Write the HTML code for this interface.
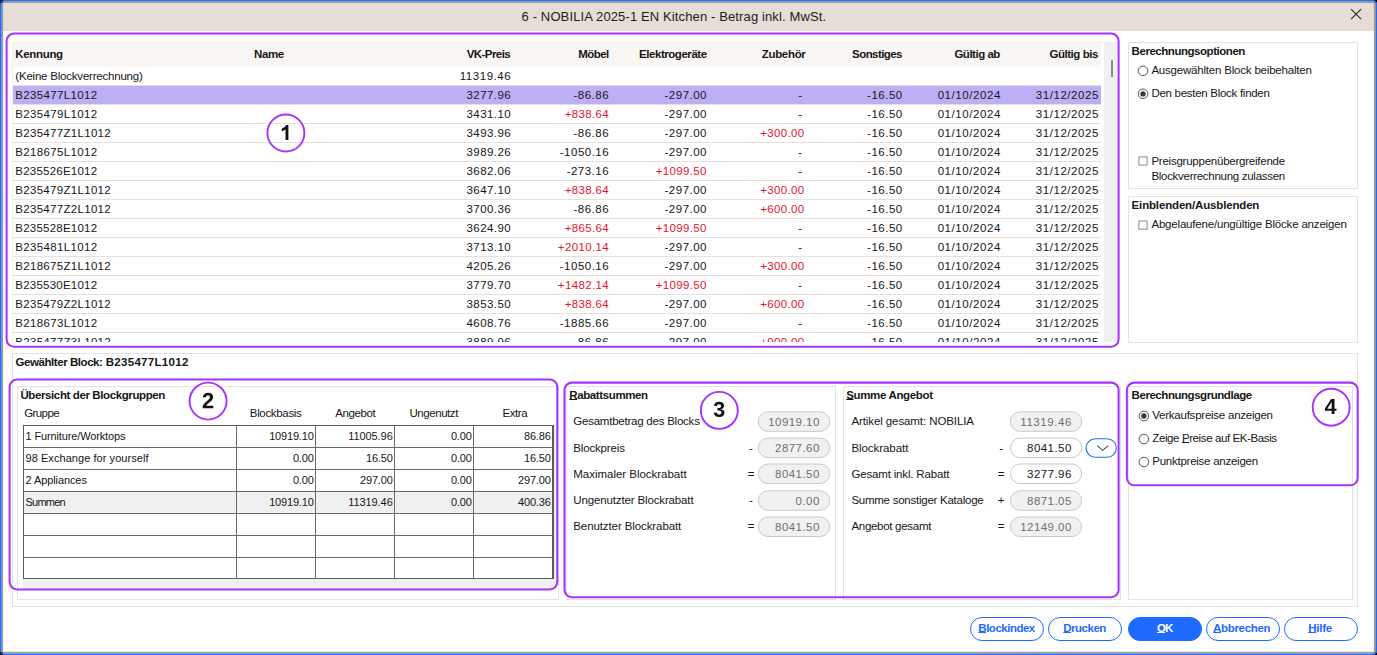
<!DOCTYPE html>
<html lang="de"><head><meta charset="utf-8"><title>Blockverrechnung</title>
<style>
html,body{margin:0;padding:0;background:#fff;}
body{width:1377px;height:655px;position:relative;overflow:hidden;font-family:"Liberation Sans",sans-serif;}
.t{position:absolute;white-space:nowrap;line-height:1;font-family:"Liberation Sans",sans-serif;}
.t u{text-decoration:underline;text-underline-offset:0px;text-decoration-thickness:1px;}
.a{position:absolute;box-sizing:border-box;}
.gb{position:absolute;box-sizing:border-box;border:1px solid #e3e3e3;}
.pill{position:absolute;box-sizing:border-box;border:1px solid #cfcfcf;border-radius:11px;background:#fff;}
.pill.dis{background:#f1f1f1;border-color:#cdcdcd;}
.btn{position:absolute;box-sizing:border-box;border:1px solid #1f6bff;border-radius:12px;background:#fff;height:24px;width:74px;top:617px;}
.btn.pri{background:#1f6bff;}
.rad{position:absolute;box-sizing:border-box;width:11px;height:11px;border:1px solid #555;border-radius:50%;background:#fff;}
.rad.on::after{content:"";position:absolute;left:2px;top:2px;width:5px;height:5px;border-radius:50%;background:#333;}
.chk{position:absolute;box-sizing:border-box;width:10px;height:10px;border:1px solid #8a8a8a;background:#fff;}
</style></head>
<body>
<div class="a" style="left:0;top:0;width:1377px;height:31px;background:#e6ddd7"></div>
<div class="a" style="left:12px;top:42px;width:1106px;height:301px;border:1px solid #eef0f0;border-right:none;border-bottom:none"></div>
<div class="a" style="left:13px;top:43px;width:1088px;height:24px;background:#f9f6f3"></div>
<div class="a" style="left:1104px;top:43px;width:13px;height:299px;background:#f0f0f0"></div>
<div class="a" style="left:1111px;top:60px;width:2px;height:17px;background:#8c8c8c"></div>
<div class="a" style="left:13px;top:67px;width:1088px;height:275px;overflow:hidden">
<div class="a" style="left:0;top:18px;width:1088px;height:1px;background:#eae0d9"></div><div class="a" style="left:0;top:37px;width:1088px;height:1px;background:#eae0d9"></div><div class="a" style="left:0;top:56px;width:1088px;height:1px;background:#eae0d9"></div><div class="a" style="left:0;top:75px;width:1088px;height:1px;background:#eae0d9"></div><div class="a" style="left:0;top:94px;width:1088px;height:1px;background:#eae0d9"></div><div class="a" style="left:0;top:113px;width:1088px;height:1px;background:#eae0d9"></div><div class="a" style="left:0;top:132px;width:1088px;height:1px;background:#eae0d9"></div><div class="a" style="left:0;top:151px;width:1088px;height:1px;background:#eae0d9"></div><div class="a" style="left:0;top:170px;width:1088px;height:1px;background:#eae0d9"></div><div class="a" style="left:0;top:189px;width:1088px;height:1px;background:#eae0d9"></div><div class="a" style="left:0;top:208px;width:1088px;height:1px;background:#eae0d9"></div><div class="a" style="left:0;top:227px;width:1088px;height:1px;background:#eae0d9"></div><div class="a" style="left:0;top:246px;width:1088px;height:1px;background:#eae0d9"></div><div class="a" style="left:0;top:265px;width:1088px;height:1px;background:#eae0d9"></div><div class="a" style="left:0;top:284px;width:1088px;height:1px;background:#eae0d9"></div>
<div class="a" style="left:0;top:19px;width:1088px;height:18px;background:#beaef6"></div>
</div>
<div class="gb" style="left:1128px;top:42px;width:230px;height:147px"></div>
<div class="gb" style="left:1128px;top:196px;width:230px;height:147px"></div>
<div class="gb" style="left:12px;top:353px;width:1346px;height:254px"></div>
<div class="gb" style="left:17px;top:386px;width:542px;height:214px"></div>
<div class="gb" style="left:566px;top:386px;width:270px;height:214px"></div>
<div class="gb" style="left:843px;top:386px;width:278px;height:214px"></div>
<div class="gb" style="left:1128px;top:386px;width:225px;height:214px"></div>
<div class="a" style="left:23px;top:425px;width:534px;height:164px;background:#f0f0f0"></div>
<div class="a" style="left:23px;top:425px;width:531px;height:154px;background:#fff;border:1px solid #5a5a5a;border-right-width:2px"></div>
<div class="a" style="left:24px;top:492px;width:528px;height:21px;background:#f0f0f0"></div>
<div class="a" style="left:23px;top:447px;width:531px;height:1px;background:#6a6a6a"></div><div class="a" style="left:23px;top:469px;width:531px;height:1px;background:#6a6a6a"></div><div class="a" style="left:23px;top:491px;width:531px;height:1px;background:#6a6a6a"></div><div class="a" style="left:23px;top:513px;width:531px;height:1px;background:#6a6a6a"></div><div class="a" style="left:23px;top:535px;width:531px;height:1px;background:#6a6a6a"></div><div class="a" style="left:23px;top:557px;width:531px;height:1px;background:#6a6a6a"></div><div class="a" style="left:236px;top:425px;width:1px;height:154px;background:#6a6a6a"></div><div class="a" style="left:315px;top:425px;width:1px;height:154px;background:#6a6a6a"></div><div class="a" style="left:394px;top:425px;width:1px;height:154px;background:#6a6a6a"></div><div class="a" style="left:473px;top:425px;width:1px;height:154px;background:#6a6a6a"></div>
<svg class="a" style="left:0;top:0" width="1377" height="655" viewBox="0 0 1377 655">
<rect x="758.3" y="411.8" width="71.5" height="19.5" rx="9.75" fill="#f1f1f1" stroke="#c9c9c9" stroke-width="1"/>
<rect x="758.3" y="438.1" width="71.5" height="19.5" rx="9.75" fill="#f1f1f1" stroke="#c9c9c9" stroke-width="1"/>
<rect x="758.3" y="464.0" width="71.5" height="19.5" rx="9.75" fill="#f1f1f1" stroke="#c9c9c9" stroke-width="1"/>
<rect x="758.3" y="490.8" width="71.5" height="19.5" rx="9.75" fill="#f1f1f1" stroke="#c9c9c9" stroke-width="1"/>
<rect x="758.3" y="517.0" width="71.5" height="19.5" rx="9.75" fill="#f1f1f1" stroke="#c9c9c9" stroke-width="1"/>
<rect x="1010.4" y="411.8" width="71.2" height="19.5" rx="9.75" fill="#f1f1f1" stroke="#c9c9c9" stroke-width="1"/>
<rect x="1010.4" y="438.1" width="71.2" height="19.5" rx="9.75" fill="#ffffff" stroke="#c9c9c9" stroke-width="1"/>
<rect x="1010.4" y="464.0" width="71.2" height="19.5" rx="9.75" fill="#ffffff" stroke="#c9c9c9" stroke-width="1"/>
<rect x="1010.4" y="490.8" width="71.2" height="19.5" rx="9.75" fill="#f1f1f1" stroke="#c9c9c9" stroke-width="1"/>
<rect x="1010.4" y="517.0" width="71.2" height="19.5" rx="9.75" fill="#f1f1f1" stroke="#c9c9c9" stroke-width="1"/>
<rect x="1086.1" y="438.7" width="30.2" height="18.6" rx="9.3" fill="#fff" stroke="#1f6bff" stroke-width="1.1"/>
<path d="M1097.2 445.6 L1102.7 450.4 L1108.2 445.6" fill="none" stroke="#4a4a4a" stroke-width="1.05"/>
<circle cx="1143.0" cy="70.9" r="4.8" fill="#fff" stroke="#4d4d4d" stroke-width="0.95"/>
<circle cx="1143.0" cy="93.9" r="4.8" fill="#fff" stroke="#4d4d4d" stroke-width="0.95"/><circle cx="1143.0" cy="93.9" r="2.7" fill="#3a3a3a"/>
<circle cx="1143.9" cy="416.0" r="4.8" fill="#fff" stroke="#4d4d4d" stroke-width="0.95"/><circle cx="1143.9" cy="416.0" r="2.7" fill="#3a3a3a"/>
<circle cx="1143.9" cy="439.0" r="4.8" fill="#fff" stroke="#4d4d4d" stroke-width="0.95"/>
<circle cx="1143.9" cy="462.0" r="4.8" fill="#fff" stroke="#4d4d4d" stroke-width="0.95"/>
<rect x="1138.9" y="156.9" width="8.2" height="8.2" fill="#fff" stroke="#8a8a8a" stroke-width="1"/>
<rect x="1138.9" y="221.0" width="8.2" height="8.2" fill="#fff" stroke="#8a8a8a" stroke-width="1"/>
</svg>
<div class="btn" style="left:970px"></div>
<div class="btn" style="left:1048px"></div>
<div class="btn pri" style="left:1128px"></div>
<div class="btn" style="left:1206px"></div>
<div class="btn" style="left:1284px"></div>
<div class="a" id="listclip" style="left:0;top:0;width:1377px;height:342px;overflow:hidden">
<span class="t" style="left:15.30px;top:71px;font-size:11.5px;color:#161616;letter-spacing:-0.210px;">(Keine Blockverrechnung)</span>
<span class="t" style="left:459.69px;top:71px;font-size:11.5px;color:#161616;letter-spacing:0.555px;">11319.46</span>
<span class="t" style="left:15.30px;top:90px;font-size:11.5px;color:#161616;letter-spacing:0.343px;">B235477L1012</span>
<span class="t" style="left:466.52px;top:90px;font-size:11.5px;color:#161616;letter-spacing:0.434px;">3277.96</span>
<span class="t" style="left:573.48px;top:90px;font-size:11.5px;color:#161616;letter-spacing:0.502px;">-86.86</span>
<span class="t" style="left:664.55px;top:90px;font-size:11.5px;color:#161616;letter-spacing:0.489px;">-297.00</span>
<span class="t" style="left:798.16px;top:90px;font-size:11.5px;color:#161616;">-</span>
<span class="t" style="left:867.08px;top:90px;font-size:11.5px;color:#161616;letter-spacing:0.502px;">-16.50</span>
<span class="t" style="left:937.66px;top:90px;font-size:11.5px;color:#161616;letter-spacing:0.564px;">01/10/2024</span>
<span class="t" style="left:1035.76px;top:90px;font-size:11.5px;color:#161616;letter-spacing:0.564px;">31/12/2025</span>
<span class="t" style="left:15.30px;top:109px;font-size:11.5px;color:#161616;letter-spacing:0.343px;">B235479L1012</span>
<span class="t" style="left:466.52px;top:109px;font-size:11.5px;color:#161616;letter-spacing:0.434px;">3431.10</span>
<span class="t" style="left:564.65px;top:109px;font-size:11.5px;color:#e5152b;letter-spacing:0.343px;">+838.64</span>
<span class="t" style="left:664.55px;top:109px;font-size:11.5px;color:#161616;letter-spacing:0.489px;">-297.00</span>
<span class="t" style="left:798.16px;top:109px;font-size:11.5px;color:#161616;">-</span>
<span class="t" style="left:867.08px;top:109px;font-size:11.5px;color:#161616;letter-spacing:0.502px;">-16.50</span>
<span class="t" style="left:937.66px;top:109px;font-size:11.5px;color:#161616;letter-spacing:0.564px;">01/10/2024</span>
<span class="t" style="left:1035.76px;top:109px;font-size:11.5px;color:#161616;letter-spacing:0.564px;">31/12/2025</span>
<span class="t" style="left:15.30px;top:128px;font-size:11.5px;color:#161616;letter-spacing:0.304px;">B235477Z1L1012</span>
<span class="t" style="left:466.52px;top:128px;font-size:11.5px;color:#161616;letter-spacing:0.434px;">3493.96</span>
<span class="t" style="left:573.48px;top:128px;font-size:11.5px;color:#161616;letter-spacing:0.502px;">-86.86</span>
<span class="t" style="left:664.55px;top:128px;font-size:11.5px;color:#161616;letter-spacing:0.489px;">-297.00</span>
<span class="t" style="left:760.25px;top:128px;font-size:11.5px;color:#e5152b;letter-spacing:0.343px;">+300.00</span>
<span class="t" style="left:867.08px;top:128px;font-size:11.5px;color:#161616;letter-spacing:0.502px;">-16.50</span>
<span class="t" style="left:937.66px;top:128px;font-size:11.5px;color:#161616;letter-spacing:0.564px;">01/10/2024</span>
<span class="t" style="left:1035.76px;top:128px;font-size:11.5px;color:#161616;letter-spacing:0.564px;">31/12/2025</span>
<span class="t" style="left:15.30px;top:147px;font-size:11.5px;color:#161616;letter-spacing:0.343px;">B218675L1012</span>
<span class="t" style="left:466.52px;top:147px;font-size:11.5px;color:#161616;letter-spacing:0.434px;">3989.26</span>
<span class="t" style="left:559.82px;top:147px;font-size:11.5px;color:#161616;letter-spacing:0.482px;">-1050.16</span>
<span class="t" style="left:664.55px;top:147px;font-size:11.5px;color:#161616;letter-spacing:0.489px;">-297.00</span>
<span class="t" style="left:798.16px;top:147px;font-size:11.5px;color:#161616;">-</span>
<span class="t" style="left:867.08px;top:147px;font-size:11.5px;color:#161616;letter-spacing:0.502px;">-16.50</span>
<span class="t" style="left:937.66px;top:147px;font-size:11.5px;color:#161616;letter-spacing:0.564px;">01/10/2024</span>
<span class="t" style="left:1035.76px;top:147px;font-size:11.5px;color:#161616;letter-spacing:0.564px;">31/12/2025</span>
<span class="t" style="left:15.30px;top:166px;font-size:11.5px;color:#161616;letter-spacing:0.226px;">B235526E1012</span>
<span class="t" style="left:466.52px;top:166px;font-size:11.5px;color:#161616;letter-spacing:0.434px;">3682.06</span>
<span class="t" style="left:566.65px;top:166px;font-size:11.5px;color:#161616;letter-spacing:0.489px;">-273.16</span>
<span class="t" style="left:655.72px;top:166px;font-size:11.5px;color:#e5152b;letter-spacing:0.355px;">+1099.50</span>
<span class="t" style="left:798.16px;top:166px;font-size:11.5px;color:#161616;">-</span>
<span class="t" style="left:867.08px;top:166px;font-size:11.5px;color:#161616;letter-spacing:0.502px;">-16.50</span>
<span class="t" style="left:937.66px;top:166px;font-size:11.5px;color:#161616;letter-spacing:0.564px;">01/10/2024</span>
<span class="t" style="left:1035.76px;top:166px;font-size:11.5px;color:#161616;letter-spacing:0.564px;">31/12/2025</span>
<span class="t" style="left:15.30px;top:185px;font-size:11.5px;color:#161616;letter-spacing:0.304px;">B235479Z1L1012</span>
<span class="t" style="left:466.52px;top:185px;font-size:11.5px;color:#161616;letter-spacing:0.434px;">3647.10</span>
<span class="t" style="left:564.65px;top:185px;font-size:11.5px;color:#e5152b;letter-spacing:0.343px;">+838.64</span>
<span class="t" style="left:664.55px;top:185px;font-size:11.5px;color:#161616;letter-spacing:0.489px;">-297.00</span>
<span class="t" style="left:760.25px;top:185px;font-size:11.5px;color:#e5152b;letter-spacing:0.343px;">+300.00</span>
<span class="t" style="left:867.08px;top:185px;font-size:11.5px;color:#161616;letter-spacing:0.502px;">-16.50</span>
<span class="t" style="left:937.66px;top:185px;font-size:11.5px;color:#161616;letter-spacing:0.564px;">01/10/2024</span>
<span class="t" style="left:1035.76px;top:185px;font-size:11.5px;color:#161616;letter-spacing:0.564px;">31/12/2025</span>
<span class="t" style="left:15.30px;top:204px;font-size:11.5px;color:#161616;letter-spacing:0.304px;">B235477Z2L1012</span>
<span class="t" style="left:466.52px;top:204px;font-size:11.5px;color:#161616;letter-spacing:0.434px;">3700.36</span>
<span class="t" style="left:573.48px;top:204px;font-size:11.5px;color:#161616;letter-spacing:0.502px;">-86.86</span>
<span class="t" style="left:664.55px;top:204px;font-size:11.5px;color:#161616;letter-spacing:0.489px;">-297.00</span>
<span class="t" style="left:760.25px;top:204px;font-size:11.5px;color:#e5152b;letter-spacing:0.343px;">+600.00</span>
<span class="t" style="left:867.08px;top:204px;font-size:11.5px;color:#161616;letter-spacing:0.502px;">-16.50</span>
<span class="t" style="left:937.66px;top:204px;font-size:11.5px;color:#161616;letter-spacing:0.564px;">01/10/2024</span>
<span class="t" style="left:1035.76px;top:204px;font-size:11.5px;color:#161616;letter-spacing:0.564px;">31/12/2025</span>
<span class="t" style="left:15.30px;top:223px;font-size:11.5px;color:#161616;letter-spacing:0.226px;">B235528E1012</span>
<span class="t" style="left:466.52px;top:223px;font-size:11.5px;color:#161616;letter-spacing:0.434px;">3624.90</span>
<span class="t" style="left:564.65px;top:223px;font-size:11.5px;color:#e5152b;letter-spacing:0.343px;">+865.64</span>
<span class="t" style="left:655.72px;top:223px;font-size:11.5px;color:#e5152b;letter-spacing:0.355px;">+1099.50</span>
<span class="t" style="left:798.16px;top:223px;font-size:11.5px;color:#161616;">-</span>
<span class="t" style="left:867.08px;top:223px;font-size:11.5px;color:#161616;letter-spacing:0.502px;">-16.50</span>
<span class="t" style="left:937.66px;top:223px;font-size:11.5px;color:#161616;letter-spacing:0.564px;">01/10/2024</span>
<span class="t" style="left:1035.76px;top:223px;font-size:11.5px;color:#161616;letter-spacing:0.564px;">31/12/2025</span>
<span class="t" style="left:15.30px;top:242px;font-size:11.5px;color:#161616;letter-spacing:0.343px;">B235481L1012</span>
<span class="t" style="left:466.52px;top:242px;font-size:11.5px;color:#161616;letter-spacing:0.434px;">3713.10</span>
<span class="t" style="left:557.82px;top:242px;font-size:11.5px;color:#e5152b;letter-spacing:0.355px;">+2010.14</span>
<span class="t" style="left:664.55px;top:242px;font-size:11.5px;color:#161616;letter-spacing:0.489px;">-297.00</span>
<span class="t" style="left:798.16px;top:242px;font-size:11.5px;color:#161616;">-</span>
<span class="t" style="left:867.08px;top:242px;font-size:11.5px;color:#161616;letter-spacing:0.502px;">-16.50</span>
<span class="t" style="left:937.66px;top:242px;font-size:11.5px;color:#161616;letter-spacing:0.564px;">01/10/2024</span>
<span class="t" style="left:1035.76px;top:242px;font-size:11.5px;color:#161616;letter-spacing:0.564px;">31/12/2025</span>
<span class="t" style="left:15.30px;top:261px;font-size:11.5px;color:#161616;letter-spacing:0.304px;">B218675Z1L1012</span>
<span class="t" style="left:466.52px;top:261px;font-size:11.5px;color:#161616;letter-spacing:0.434px;">4205.26</span>
<span class="t" style="left:559.82px;top:261px;font-size:11.5px;color:#161616;letter-spacing:0.482px;">-1050.16</span>
<span class="t" style="left:664.55px;top:261px;font-size:11.5px;color:#161616;letter-spacing:0.489px;">-297.00</span>
<span class="t" style="left:760.25px;top:261px;font-size:11.5px;color:#e5152b;letter-spacing:0.343px;">+300.00</span>
<span class="t" style="left:867.08px;top:261px;font-size:11.5px;color:#161616;letter-spacing:0.502px;">-16.50</span>
<span class="t" style="left:937.66px;top:261px;font-size:11.5px;color:#161616;letter-spacing:0.564px;">01/10/2024</span>
<span class="t" style="left:1035.76px;top:261px;font-size:11.5px;color:#161616;letter-spacing:0.564px;">31/12/2025</span>
<span class="t" style="left:15.30px;top:280px;font-size:11.5px;color:#161616;letter-spacing:0.226px;">B235530E1012</span>
<span class="t" style="left:466.52px;top:280px;font-size:11.5px;color:#161616;letter-spacing:0.434px;">3779.70</span>
<span class="t" style="left:557.82px;top:280px;font-size:11.5px;color:#e5152b;letter-spacing:0.355px;">+1482.14</span>
<span class="t" style="left:655.72px;top:280px;font-size:11.5px;color:#e5152b;letter-spacing:0.355px;">+1099.50</span>
<span class="t" style="left:798.16px;top:280px;font-size:11.5px;color:#161616;">-</span>
<span class="t" style="left:867.08px;top:280px;font-size:11.5px;color:#161616;letter-spacing:0.502px;">-16.50</span>
<span class="t" style="left:937.66px;top:280px;font-size:11.5px;color:#161616;letter-spacing:0.564px;">01/10/2024</span>
<span class="t" style="left:1035.76px;top:280px;font-size:11.5px;color:#161616;letter-spacing:0.564px;">31/12/2025</span>
<span class="t" style="left:15.30px;top:299px;font-size:11.5px;color:#161616;letter-spacing:0.304px;">B235479Z2L1012</span>
<span class="t" style="left:466.52px;top:299px;font-size:11.5px;color:#161616;letter-spacing:0.434px;">3853.50</span>
<span class="t" style="left:564.65px;top:299px;font-size:11.5px;color:#e5152b;letter-spacing:0.343px;">+838.64</span>
<span class="t" style="left:664.55px;top:299px;font-size:11.5px;color:#161616;letter-spacing:0.489px;">-297.00</span>
<span class="t" style="left:760.25px;top:299px;font-size:11.5px;color:#e5152b;letter-spacing:0.343px;">+600.00</span>
<span class="t" style="left:867.08px;top:299px;font-size:11.5px;color:#161616;letter-spacing:0.502px;">-16.50</span>
<span class="t" style="left:937.66px;top:299px;font-size:11.5px;color:#161616;letter-spacing:0.564px;">01/10/2024</span>
<span class="t" style="left:1035.76px;top:299px;font-size:11.5px;color:#161616;letter-spacing:0.564px;">31/12/2025</span>
<span class="t" style="left:15.30px;top:318px;font-size:11.5px;color:#161616;letter-spacing:0.343px;">B218673L1012</span>
<span class="t" style="left:466.52px;top:318px;font-size:11.5px;color:#161616;letter-spacing:0.434px;">4608.76</span>
<span class="t" style="left:559.82px;top:318px;font-size:11.5px;color:#161616;letter-spacing:0.482px;">-1885.66</span>
<span class="t" style="left:664.55px;top:318px;font-size:11.5px;color:#161616;letter-spacing:0.489px;">-297.00</span>
<span class="t" style="left:798.16px;top:318px;font-size:11.5px;color:#161616;">-</span>
<span class="t" style="left:867.08px;top:318px;font-size:11.5px;color:#161616;letter-spacing:0.502px;">-16.50</span>
<span class="t" style="left:937.66px;top:318px;font-size:11.5px;color:#161616;letter-spacing:0.564px;">01/10/2024</span>
<span class="t" style="left:1035.76px;top:318px;font-size:11.5px;color:#161616;letter-spacing:0.564px;">31/12/2025</span>
<span class="t" style="left:15.30px;top:337px;font-size:11.5px;color:#161616;letter-spacing:0.304px;">B235477Z3L1012</span>
<span class="t" style="left:466.52px;top:337px;font-size:11.5px;color:#161616;letter-spacing:0.434px;">3889.96</span>
<span class="t" style="left:573.48px;top:337px;font-size:11.5px;color:#161616;letter-spacing:0.502px;">-86.86</span>
<span class="t" style="left:664.55px;top:337px;font-size:11.5px;color:#161616;letter-spacing:0.489px;">-297.00</span>
<span class="t" style="left:760.25px;top:337px;font-size:11.5px;color:#e5152b;letter-spacing:0.343px;">+900.00</span>
<span class="t" style="left:867.08px;top:337px;font-size:11.5px;color:#161616;letter-spacing:0.502px;">-16.50</span>
<span class="t" style="left:937.66px;top:337px;font-size:11.5px;color:#161616;letter-spacing:0.564px;">01/10/2024</span>
<span class="t" style="left:1035.76px;top:337px;font-size:11.5px;color:#161616;letter-spacing:0.564px;">31/12/2025</span>
</div>
<span class="t" style="left:15.30px;top:49px;font-size:11.5px;color:#161616;font-weight:bold;letter-spacing:-0.338px;">Kennung</span>
<span class="t" style="left:254.10px;top:49px;font-size:11.5px;color:#161616;font-weight:bold;letter-spacing:-0.443px;">Name</span>
<span class="t" style="left:466.70px;top:49px;font-size:11.5px;color:#161616;font-weight:bold;letter-spacing:-0.562px;">VK-Preis</span>
<span class="t" style="left:578.20px;top:49px;font-size:11.5px;color:#161616;font-weight:bold;letter-spacing:-0.559px;">Möbel</span>
<span class="t" style="left:639.10px;top:49px;font-size:11.5px;color:#161616;font-weight:bold;letter-spacing:-0.460px;">Elektrogeräte</span>
<span class="t" style="left:761.80px;top:49px;font-size:11.5px;color:#161616;font-weight:bold;letter-spacing:-0.333px;">Zubehör</span>
<span class="t" style="left:852.10px;top:49px;font-size:11.5px;color:#161616;font-weight:bold;letter-spacing:-0.571px;">Sonstiges</span>
<span class="t" style="left:954.40px;top:49px;font-size:11.5px;color:#161616;font-weight:bold;letter-spacing:-0.480px;">Gültig ab</span>
<span class="t" style="left:1049.40px;top:49px;font-size:11.5px;color:#161616;font-weight:bold;letter-spacing:-0.448px;">Gültig bis</span>
<span class="t" style="left:1131.60px;top:46px;font-size:11.5px;color:#161616;font-weight:bold;letter-spacing:-0.457px;">Berechnungsoptionen</span>
<span class="t" style="left:1151.40px;top:65px;font-size:11.5px;color:#161616;letter-spacing:-0.198px;">Ausgewählten Block beibehalten</span>
<span class="t" style="left:1151.40px;top:88px;font-size:11.5px;color:#161616;letter-spacing:-0.281px;">Den besten Block finden</span>
<span class="t" style="left:1151.40px;top:156px;font-size:11.5px;color:#161616;letter-spacing:-0.233px;">Preisgruppenübergreifende</span>
<span class="t" style="left:1151.40px;top:171px;font-size:11.5px;color:#161616;letter-spacing:-0.285px;">Blockverrechnung zulassen</span>
<span class="t" style="left:1131.60px;top:200px;font-size:11.5px;color:#161616;font-weight:bold;letter-spacing:-0.159px;">Einblenden/Ausblenden</span>
<span class="t" style="left:1151.40px;top:219px;font-size:11.5px;color:#161616;letter-spacing:-0.185px;">Abgelaufene/ungültige Blöcke anzeigen</span>
<span class="t" style="left:15.50px;top:357px;font-size:11.5px;color:#161616;font-weight:bold;letter-spacing:-0.437px;">Gewählter Block:</span>
<span class="t" style="left:105.70px;top:357px;font-size:11.5px;color:#161616;font-weight:bold;letter-spacing:0.300px;">B235477L1012</span>
<span class="t" style="left:20.40px;top:390px;font-size:11.5px;color:#161616;font-weight:bold;letter-spacing:-0.386px;">Übersicht der Blockgruppen</span>
<span class="t" style="left:24.20px;top:408px;font-size:11.5px;color:#161616;letter-spacing:-0.592px;">Gruppe</span>
<span class="t" style="left:249.80px;top:408px;font-size:11.5px;color:#161616;letter-spacing:-0.330px;">Blockbasis</span>
<span class="t" style="left:335.20px;top:408px;font-size:11.5px;color:#161616;letter-spacing:-0.410px;">Angebot</span>
<span class="t" style="left:409.40px;top:408px;font-size:11.5px;color:#161616;letter-spacing:-0.430px;">Ungenutzt</span>
<span class="t" style="left:502.40px;top:408px;font-size:11.5px;color:#161616;letter-spacing:-0.411px;">Extra</span>
<span class="t" style="left:25.50px;top:431px;font-size:11px;color:#161616;letter-spacing:-0.132px;">1 Furniture/Worktops</span>
<span class="t" style="left:269.15px;top:431px;font-size:11px;color:#161616;letter-spacing:-0.177px;">10919.10</span>
<span class="t" style="left:348.15px;top:431px;font-size:11px;color:#161616;letter-spacing:-0.061px;">11005.96</span>
<span class="t" style="left:450.95px;top:431px;font-size:11px;color:#161616;letter-spacing:-0.191px;">0.00</span>
<span class="t" style="left:524.00px;top:431px;font-size:11px;color:#161616;letter-spacing:-0.183px;">86.86</span>
<span class="t" style="left:25.50px;top:453px;font-size:11px;color:#161616;letter-spacing:0.057px;">98 Exchange for yourself</span>
<span class="t" style="left:292.95px;top:453px;font-size:11px;color:#161616;letter-spacing:-0.191px;">0.00</span>
<span class="t" style="left:366.00px;top:453px;font-size:11px;color:#161616;letter-spacing:-0.183px;">16.50</span>
<span class="t" style="left:450.95px;top:453px;font-size:11px;color:#161616;letter-spacing:-0.191px;">0.00</span>
<span class="t" style="left:524.00px;top:453px;font-size:11px;color:#161616;letter-spacing:-0.183px;">16.50</span>
<span class="t" style="left:25.50px;top:475px;font-size:11px;color:#161616;letter-spacing:-0.090px;">2 Appliances</span>
<span class="t" style="left:292.95px;top:475px;font-size:11px;color:#161616;letter-spacing:-0.191px;">0.00</span>
<span class="t" style="left:360.05px;top:475px;font-size:11px;color:#161616;letter-spacing:-0.181px;">297.00</span>
<span class="t" style="left:450.95px;top:475px;font-size:11px;color:#161616;letter-spacing:-0.191px;">0.00</span>
<span class="t" style="left:518.05px;top:475px;font-size:11px;color:#161616;letter-spacing:-0.181px;">297.00</span>
<span class="t" style="left:25.50px;top:497px;font-size:11px;color:#161616;letter-spacing:-0.786px;">Summen</span>
<span class="t" style="left:269.15px;top:497px;font-size:11px;color:#161616;letter-spacing:-0.177px;">10919.10</span>
<span class="t" style="left:348.15px;top:497px;font-size:11px;color:#161616;letter-spacing:-0.061px;">11319.46</span>
<span class="t" style="left:450.95px;top:497px;font-size:11px;color:#161616;letter-spacing:-0.191px;">0.00</span>
<span class="t" style="left:518.05px;top:497px;font-size:11px;color:#161616;letter-spacing:-0.181px;">400.36</span>
<span class="t" style="left:569.30px;top:390px;font-size:11.5px;color:#161616;font-weight:bold;letter-spacing:-0.390px;"><u>R</u>abattsummen</span>
<span class="t" style="left:846.20px;top:390px;font-size:11.5px;color:#161616;font-weight:bold;letter-spacing:-0.346px;"><u>S</u>umme Angebot</span>
<span class="t" style="left:573.30px;top:416px;font-size:11.5px;color:#161616;letter-spacing:-0.231px;">Gesamtbetrag des Blocks</span>
<span class="t" style="left:768.29px;top:417px;font-size:11.5px;color:#6f6f6f;letter-spacing:0.434px;">10919.10</span>
<span class="t" style="left:573.30px;top:443px;font-size:11.5px;color:#161616;letter-spacing:-0.162px;">Blockpreis</span>
<span class="t" style="left:749.08px;top:443px;font-size:11.5px;color:#161616;">-</span>
<span class="t" style="left:775.12px;top:443px;font-size:11.5px;color:#6f6f6f;letter-spacing:0.434px;">2877.60</span>
<span class="t" style="left:573.30px;top:469px;font-size:11.5px;color:#161616;letter-spacing:-0.023px;">Maximaler Blockrabatt</span>
<span class="t" style="left:747.64px;top:469px;font-size:11.5px;color:#161616;">=</span>
<span class="t" style="left:775.12px;top:469px;font-size:11.5px;color:#6f6f6f;letter-spacing:0.434px;">8041.50</span>
<span class="t" style="left:573.30px;top:495px;font-size:11.5px;color:#161616;letter-spacing:-0.140px;">Ungenutzter Blockrabatt</span>
<span class="t" style="left:749.08px;top:495px;font-size:11.5px;color:#161616;">-</span>
<span class="t" style="left:795.61px;top:496px;font-size:11.5px;color:#6f6f6f;letter-spacing:0.433px;">0.00</span>
<span class="t" style="left:573.30px;top:521px;font-size:11.5px;color:#161616;letter-spacing:-0.098px;">Benutzter Blockrabatt</span>
<span class="t" style="left:747.64px;top:521px;font-size:11.5px;color:#161616;">=</span>
<span class="t" style="left:775.12px;top:522px;font-size:11.5px;color:#6f6f6f;letter-spacing:0.434px;">8041.50</span>
<span class="t" style="left:851.40px;top:416px;font-size:11.5px;color:#161616;letter-spacing:-0.092px;">Artikel gesamt: NOBILIA</span>
<span class="t" style="left:1020.29px;top:417px;font-size:11.5px;color:#6f6f6f;letter-spacing:0.555px;">11319.46</span>
<span class="t" style="left:851.40px;top:443px;font-size:11.5px;color:#161616;letter-spacing:-0.053px;">Blockrabatt</span>
<span class="t" style="left:999.28px;top:443px;font-size:11.5px;color:#161616;">-</span>
<span class="t" style="left:1027.12px;top:443px;font-size:11.5px;color:#161616;letter-spacing:0.434px;">8041.50</span>
<span class="t" style="left:851.40px;top:469px;font-size:11.5px;color:#161616;letter-spacing:-0.166px;">Gesamt inkl. Rabatt</span>
<span class="t" style="left:997.84px;top:469px;font-size:11.5px;color:#161616;">=</span>
<span class="t" style="left:1027.12px;top:469px;font-size:11.5px;color:#161616;letter-spacing:0.434px;">3277.96</span>
<span class="t" style="left:851.40px;top:495px;font-size:11.5px;color:#161616;letter-spacing:-0.251px;">Summe sonstiger Kataloge</span>
<span class="t" style="left:997.84px;top:495px;font-size:11.5px;color:#161616;">+</span>
<span class="t" style="left:1027.12px;top:496px;font-size:11.5px;color:#6f6f6f;letter-spacing:0.434px;">8871.05</span>
<span class="t" style="left:851.40px;top:521px;font-size:11.5px;color:#161616;letter-spacing:-0.290px;">Angebot gesamt</span>
<span class="t" style="left:997.84px;top:521px;font-size:11.5px;color:#161616;">=</span>
<span class="t" style="left:1020.29px;top:522px;font-size:11.5px;color:#6f6f6f;letter-spacing:0.434px;">12149.00</span>
<span class="t" style="left:1131.60px;top:390px;font-size:11.5px;color:#161616;font-weight:bold;letter-spacing:-0.451px;">Berechnungsgrundlage</span>
<span class="t" style="left:1152.30px;top:410px;font-size:11.5px;color:#161616;letter-spacing:-0.239px;">Verkaufspreise anzeigen</span>
<span class="t" style="left:1152.30px;top:433px;font-size:11.5px;color:#161616;letter-spacing:-0.394px;">Zeige <u>P</u>reise auf EK-Basis</span>
<span class="t" style="left:1152.30px;top:456px;font-size:11.5px;color:#161616;letter-spacing:-0.253px;">Punktpreise anzeigen</span>
<span class="t" style="left:978.35px;top:623px;font-size:11.5px;color:#1f6bff;font-weight:bold;letter-spacing:-0.497px;"><u>B</u>lockindex</span>
<span class="t" style="left:1063.30px;top:623px;font-size:11.5px;color:#1f6bff;font-weight:bold;letter-spacing:-0.505px;"><u>D</u>rucken</span>
<span class="t" style="left:1157.07px;top:623px;font-size:11.5px;color:#fff;font-weight:bold;letter-spacing:-1.000px;"><u>O</u>K</span>
<span class="t" style="left:1213.10px;top:623px;font-size:11.5px;color:#1f6bff;font-weight:bold;letter-spacing:-0.335px;"><u>A</u>bbrechen</span>
<span class="t" style="left:1308.15px;top:623px;font-size:11.5px;color:#1f6bff;font-weight:bold;letter-spacing:-0.209px;"><u>H</u>ilfe</span>
<span class="t" style="left:521.60px;top:10px;font-size:13px;color:#1c1c1c;letter-spacing:0.124px;">6 - NOBILIA 2025-1 EN Kitchen - Betrag inkl. MwSt.</span>
<svg class="a" style="left:0;top:0" width="1377" height="655" viewBox="0 0 1377 655">
<rect x="6.6" y="33.5" width="1112.0" height="313.2" rx="7.5" ry="7.5" fill="none" stroke="#a833ff" stroke-width="2.05"/>
<rect x="9.6" y="379.5" width="547.6999999999999" height="209.89999999999998" rx="7.5" ry="7.5" fill="none" stroke="#a833ff" stroke-width="2.05"/>
<rect x="564.5" y="382.6" width="554.0999999999999" height="214.60000000000002" rx="7.5" ry="7.5" fill="none" stroke="#a833ff" stroke-width="2.05"/>
<rect x="1126.9" y="382.6" width="230.79999999999995" height="102.69999999999999" rx="7.5" ry="7.5" fill="none" stroke="#a833ff" stroke-width="2.05"/>
<circle cx="285.9" cy="133.0" r="18.5" fill="none" stroke="#a833ff" stroke-width="1.9"/>
<circle cx="208.1" cy="401.1" r="18.5" fill="none" stroke="#a833ff" stroke-width="1.9"/>
<circle cx="719.3" cy="410.4" r="18.5" fill="none" stroke="#a833ff" stroke-width="1.9"/>
<circle cx="1331.2" cy="407.2" r="18.5" fill="none" stroke="#a833ff" stroke-width="1.9"/>
<path transform="translate(276.7,140) scale(0.010254,-0.010254)" d="M1141 0H860V1059Q706 915 497 846V1101Q607 1137 736 1237.5Q865 1338 913 1472H1141Z" fill="#111"/>
<path transform="translate(201.95,408.15) scale(0.0107,-0.0107)" d="M71 0V195Q126 316 227.5 431.0Q329 546 483 671Q631 791 690.5 869.0Q750 947 750 1022Q750 1206 565 1206Q475 1206 427.5 1157.5Q380 1109 366 1012L83 1028Q107 1224 229.5 1327.0Q352 1430 563 1430Q791 1430 913.0 1326.0Q1035 1222 1035 1034Q1035 935 996.0 855.0Q957 775 896.0 707.5Q835 640 760.5 581.0Q686 522 616.0 466.0Q546 410 488.5 353.0Q431 296 403 231H1057V0Z" fill="#111"/>
<path transform="translate(713.25,416.8) scale(0.0105,-0.0105)" d="M1065 391Q1065 193 935.0 85.0Q805 -23 565 -23Q338 -23 204.0 81.5Q70 186 47 383L333 408Q360 205 564 205Q665 205 721.0 255.0Q777 305 777 408Q777 502 709.0 552.0Q641 602 507 602H409V829H501Q622 829 683.0 878.5Q744 928 744 1020Q744 1107 695.5 1156.5Q647 1206 554 1206Q467 1206 413.5 1158.0Q360 1110 352 1022L71 1042Q93 1224 222.0 1327.0Q351 1430 559 1430Q780 1430 904.5 1330.5Q1029 1231 1029 1055Q1029 923 951.5 838.0Q874 753 728 725V721Q890 702 977.5 614.5Q1065 527 1065 391Z" fill="#111"/>
<path transform="translate(1324.55,413.9) scale(0.0106,-0.0106)" d="M940 287V0H672V287H31V498L626 1409H940V496H1128V287ZM672 957Q672 1011 675.5 1074.0Q679 1137 681 1155Q655 1099 587 993L260 496H672Z" fill="#111"/>
<path d="M1351.1 9.1 L1361.1 19.1 M1361.1 9.1 L1351.1 19.1" stroke="#222" stroke-width="1.05" fill="none"/>
<rect x="0" y="0" width="1377" height="1.4" fill="#1f6bff"/><rect x="0" y="1.4" width="1377" height="1.6" fill="#9b9690"/>
<rect x="0" y="653.5" width="1377" height="1.5" fill="#1f6bff"/><rect x="0" y="651.8" width="1377" height="1.7" fill="#9b9690"/>
<rect x="1.5" y="1.4" width="1.6" height="652" fill="#9b9690"/><rect x="0" y="0" width="1.5" height="655" fill="#1f6bff"/>
<rect x="1373.9" y="1.4" width="2.1" height="652" fill="#9b9690"/><rect x="1376" y="0" width="1" height="655" fill="#1f6bff"/>
<path d="M0 0 L3.4 0 L0 3.4 Z" fill="#000"/><path d="M1377 0 L1374 0 L1377 3 Z" fill="#000"/><path d="M0 655 L3.4 655 L0 651.6 Z" fill="#000"/><path d="M1377 655 L1374 655 L1377 652 Z" fill="#000"/>
<path d="M0 4.2 L4.2 0" stroke="#1f6bff" stroke-width="1.5"/><path d="M1377 3.8 L1373.2 0" stroke="#1f6bff" stroke-width="1.4"/><path d="M0 650.8 L4.2 655" stroke="#1f6bff" stroke-width="1.5"/><path d="M1377 651.2 L1373.2 655" stroke="#1f6bff" stroke-width="1.4"/>
</svg>
</body></html>
